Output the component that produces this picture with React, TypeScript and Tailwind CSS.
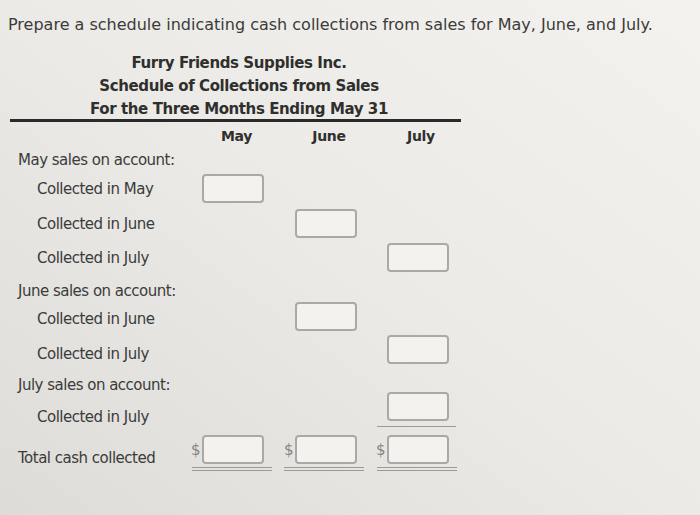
import React from "react";

const Box = () => (
  <div className="w-[62px] h-[29px] shrink-0 rounded-[4px] border-2 border-[#a9a9a8] bg-[#f3f2ef]" />
);

const BoxCell = () => (
  <div className="flex items-center pl-[12px]">
    <Box />
  </div>
);

const Empty = () => <div />;

const TotalCell = ({ ml = "ml-[2px]" }: { ml?: string }) => (
  <div className="flex flex-col">
    <div className="flex items-center">
      <span className="w-[12px] pl-[1px] text-[15px] leading-[20px] text-[#858583]">$</span>
      <Box />
    </div>
    <div className={`${ml} mt-[3px] w-[80px] h-[4px] border-y border-[#9a9a98]`} />
  </div>
);

type RowProps = {
  label: string;
  indent?: boolean;
  h: string;
  lm?: string;
  cells: React.ReactNode[];
};

const Row = ({ label, indent, h, lm = "", cells }: RowProps) => (
  <div className={`grid grid-cols-[172px_93px_92px_92px] items-center ${h}`}>
    <div className={`${indent ? "pl-[19px]" : ""} ${lm} text-[15px] leading-[20px] tracking-[-0.5px]`}>{label}</div>
    {cells.map((c, i) => (
      <div key={i}>{c}</div>
    ))}
  </div>
);

export default function App() {
  return (
    <div
      className="w-[700px] h-[515px] overflow-hidden bg-gradient-to-tr from-[#dddcd8] via-[#ebeae6] to-[#f3f2ee] text-[#3b3b3a]"
      style={{ fontFamily: '"DejaVu Sans", Verdana, sans-serif' }}
    >
      <div className="pl-[8px] pt-[15px] h-[52px] text-[16px] leading-[20px]">
        Prepare a schedule indicating cash collections from sales for May, June, and July.
      </div>
      <div className="w-[478px] h-[67px] text-center font-bold text-[15px] leading-[23px] tracking-[-0.4px] text-[#2f2f2e]">
        <div>Furry Friends Supplies Inc.</div>
        <div>Schedule of Collections from Sales</div>
        <div>For the Three Months Ending May 31</div>
      </div>
      <div className="ml-[10px] w-[451px] h-[3px] bg-[#2a2a2a]" />
      <div className="pl-[18px]">
        <div className="grid grid-cols-[172px_93px_92px_92px] items-center h-[28px] font-bold text-[14px] tracking-[-0.3px] text-[#2f2f2e]">
          <div />
          <div className="text-center">May</div>
          <div className="text-center">June</div>
          <div className="text-center">July</div>
        </div>
        <Row label="May sales on account:" h="h-[20px]" cells={[<Empty />, <Empty />, <Empty />]} />
        <Row label="Collected in May" indent h="h-[37px]" cells={[<BoxCell />, <Empty />, <Empty />]} />
        <Row label="Collected in June" indent h="h-[33px]" cells={[<Empty />, <BoxCell />, <Empty />]} />
        <Row label="Collected in July" indent h="h-[35px]" cells={[<Empty />, <Empty />, <BoxCell />]} />
        <Row label="June sales on account:" lm="mt-[5px]" h="h-[26px]" cells={[<Empty />, <Empty />, <Empty />]} />
        <Row label="Collected in June" indent lm="mt-[5px]" h="h-[30px]" cells={[<Empty />, <BoxCell />, <Empty />]} />
        <Row label="Collected in July" indent lm="mt-[10px]" h="h-[36px]" cells={[<Empty />, <Empty />, <BoxCell />]} />
        <Row label="July sales on account:" lm="mt-[8px]" h="h-[25px]" cells={[<Empty />, <Empty />, <Empty />]} />
        <div className="grid grid-cols-[172px_93px_92px_92px] items-start h-[43px]">
          <div className="pl-[19px] mt-[15px] text-[15px] leading-[20px] tracking-[-0.5px]">Collected in July</div>
          <div />
          <div />
          <div className="flex flex-col">
            <div className="pl-[12px]">
              <Box />
            </div>
            <div className="ml-[2px] mt-[5px] w-[79px] h-[1px] bg-[#9a9a98]" />
          </div>
        </div>
        <div className="grid grid-cols-[172px_93px_92px_92px] items-start h-[44px]">
          <div className="mt-[13px] text-[15px] leading-[20px] tracking-[-0.5px]">Total cash collected</div>
          <TotalCell />
          <TotalCell ml="ml-[1px]" />
          <TotalCell ml="ml-[2px]" />
        </div>
      </div>
    </div>
  );
}
